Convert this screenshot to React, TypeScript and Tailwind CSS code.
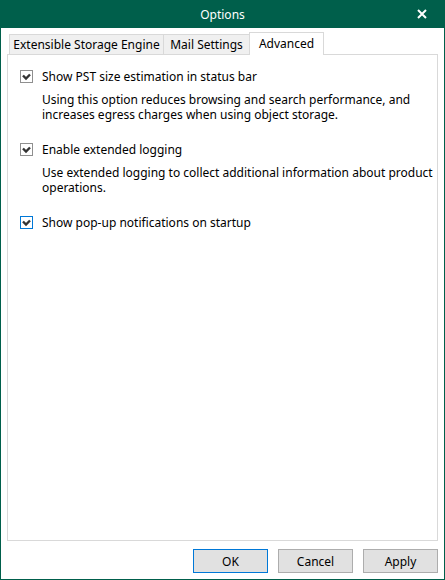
import type { ReactNode } from "react";

const font = { fontFamily: '"Segoe UI", "Noto Sans", sans-serif' };

function Check({ focused = false }: { focused?: boolean }) {
  return (
    <span
      className={`flex h-[13px] w-[13px] shrink-0 items-center justify-center border bg-white ${
        focused ? "border-[#0078d7]" : "border-[#8f8f8f]"
      }`}
    >
      <svg width="11" height="11" viewBox="0 0 11 11">
        <polyline points="2,4.5 5,7.5 9,3.5" fill="none" stroke="#333" strokeWidth="2.4" />
      </svg>
    </span>
  );
}

function Option({
  label,
  focused,
  children,
}: {
  label: string;
  focused?: boolean;
  children?: ReactNode;
}) {
  return (
    <div>
      <div className="flex h-[15px] items-center gap-[9px]">
        <Check focused={focused} />
        <span>{label}</span>
      </div>
      {children && <p className="mt-[8px] pl-[22px]">{children}</p>}
    </div>
  );
}

function Button({ label, primary }: { label: string; primary?: boolean }) {
  return (
    <button
      className={`h-[24px] w-[75px] border bg-[#e1e1e1] text-[12px] text-black ${
        primary ? "border-[#0078d7]" : "border-[#adadad]"
      }`}
    >
      {label}
    </button>
  );
}

export default function App() {
  return (
    <div
      className="flex h-[580px] w-[445px] flex-col border-x border-b border-[#005f4b] bg-white text-[12px] leading-[15px] text-black"
      style={font}
    >
      {/* Title bar */}
      <div className="relative -mx-px flex h-[28px] shrink-0 items-center justify-center bg-[#005f4b] text-white">
        <span>Options</span>
        <svg className="absolute right-[18px] top-[9px]" width="10" height="10" viewBox="0 0 10 10">
          <path d="M1 1 L9 9 M9 1 L1 9" stroke="#fff" strokeWidth="2" />
        </svg>
      </div>

      <div className="flex flex-1 flex-col px-[6px] pt-[4px] pb-[6px]">
        {/* Tabs */}
        <div className="relative z-10 mb-[-1px] ml-[2px] flex h-[23px] items-end">
          <div className="flex h-[21px] w-[155px] items-center justify-center border border-[#d9d9d9] bg-[#f0f0f0]">
            Extensible Storage Engine
          </div>
          <div className="flex h-[21px] w-[86px] items-center justify-center border border-l-0 border-[#d9d9d9] bg-[#f0f0f0]">
            Mail Settings
          </div>
          <div className="-ml-px flex h-[23px] w-[75px] items-center justify-center border border-b-0 border-[#d9d9d9] bg-white pb-[2px]">
            Advanced
          </div>
        </div>

        {/* Panel */}
        <div className="flex flex-1 flex-col gap-[20px] border border-[#d9d9d9] pt-[14px] pl-[12px]">
          <Option label="Show PST size estimation in status bar">
            Using this option reduces browsing and search performance, and
            <br />
            increases egress charges when using object storage.
          </Option>
          <Option label="Enable extended logging">
            Use extended logging to collect additional information about product
            <br />
            operations.
          </Option>
          <Option label="Show pop-up notifications on startup" focused />
        </div>

        {/* Buttons */}
        <div className="mt-[8px] flex justify-end gap-[10px]">
          <Button label="OK" primary />
          <Button label="Cancel" />
          <Button label="Apply" />
        </div>
      </div>
    </div>
  );
}
